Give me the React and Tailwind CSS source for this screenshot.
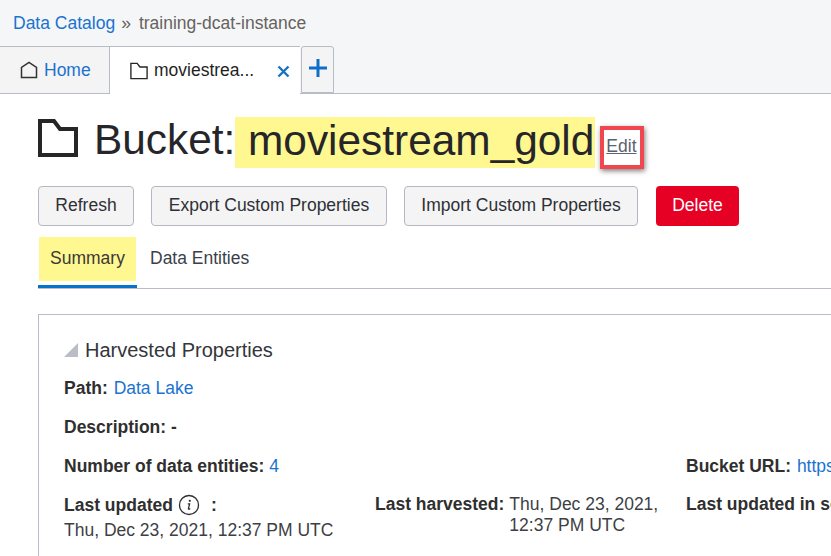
const FolderIcon = ({ size, sw, className }) => (
  <svg width={size} height={size} viewBox="0 0 40 40" fill="none" className={className}>
    <path d="M2 3H16L22 11H38V37H2Z" stroke="#262626" strokeWidth={sw} strokeLinejoin="miter" />
  </svg>
);

const Label = ({ children }) => <span className="font-bold text-[#2f2f2f]">{children}</span>;
const A = ({ children }) => <span className="text-[#1a73d0]">{children}</span>;
const Btn = ({ children, className }) => (
  <div className={`h-10 pb-[1px] flex items-center justify-center rounded-[4px] border border-[#b4b8c2] bg-[#f4f4f5] text-[#2f3035] ${className}`}>{children}</div>
);

export default function App() {
  return (
    <div className="w-[831px] h-[556px] overflow-hidden bg-white text-[17.5px] text-[#2f2f2f] font-['Liberation_Sans',Arial,sans-serif]">
      <div className="h-[46px] bg-[#f5f6f8] flex items-center pl-[13px]">
        <span className="text-[#1a73d0]">Data Catalog</span>
        <span className="text-[#66625e] ml-[6px]">»</span>
        <span className="text-[#66625e] ml-[8px] text-[17.5px]">training-dcat-instance</span>
      </div>

      <div className="h-[48px] bg-[#f5f6f8] flex border-b border-[#b8bcc6]">
        <div className="w-[110px] h-[47px] bg-[#f4f4f5] border-t border-r border-[#b8bcc6] flex items-center pl-[20px] gap-[6px]">
          <svg width="18" height="18" viewBox="0 0 18 18" fill="none">
            <path d="M1.5 16.5V6.5L9 1.5L16.5 6.5V16.5Z" stroke="#333" strokeWidth="1.5" />
          </svg>
          <A>Home</A>
        </div>
        <div className="w-[190px] h-[48px] bg-white border-t border-[#b8bcc6] flex items-center pl-[20px] relative z-10">
          <FolderIcon size={18} sw={3} />
          <span className="ml-[6px] text-[#1f1f1f]">moviestrea...</span>
          <svg width="13" height="13" viewBox="0 0 13 13" className="ml-[23px] mt-[2px]">
            <path d="M1.5 1.5L11.5 11.5M11.5 1.5L1.5 11.5" stroke="#1a73c0" strokeWidth="2.4" />
          </svg>
        </div>
        <div className="ml-[1px] w-[33px] h-[47px] bg-[#f4f4f5] border border-[#b8bcc6] rounded-t-[3px] flex items-center justify-center pb-[3px]">
          <svg width="18" height="18" viewBox="0 0 18 18">
            <path d="M9 0V18M0 9H18" stroke="#0f6fc6" strokeWidth="3" />
          </svg>
        </div>
      </div>

      <div className="pl-[38px]">
        <div className="h-[92px] flex items-start relative">
          <FolderIcon size={40} sw={4} className="mt-[24px]" />
          <span className="text-[42.4px] leading-[48px] mt-[22px] ml-[16px] w-[141px] whitespace-nowrap text-[#26262a]">Bucket:</span>
          <span className="text-[42.4px] leading-[47px] h-[51px] mt-[23px] pl-[13px] pr-[1px] bg-[#fff78f] text-[#26262a]">moviestream_gold</span>
          <span className="mt-[39px] ml-[11px] underline text-[#5a626c]">Edit</span>
          <div className="absolute left-[562px] top-[32px] w-[44px] h-[43px] border-[4px] border-[#f04650] shadow-[1px_2px_5px_rgba(0,0,0,0.5)]" />
        </div>

        <div className="flex items-start">
          <Btn className="w-[96px]">Refresh</Btn>
          <Btn className="w-[236px] ml-[17px]">Export Custom Properties</Btn>
          <Btn className="w-[234px] ml-[17px]">Import Custom Properties</Btn>
          <div className="w-[83px] h-10 pb-[1px] ml-[18px] rounded-[4px] bg-[#e60023] text-white flex items-center justify-center">Delete</div>
        </div>

        <div className="mt-[11px] h-[52px] flex items-start border-b border-[#b8bcc6]">
          <div className="w-[99px] h-[51px] border-b-[3px] border-[#0572ce] ">
            <div className="ml-[1px] w-[97px] h-[44px] pb-[1px] bg-[#fff78f] flex items-center justify-center text-[#3a3a3a]">Summary</div>
          </div>
          <div className="ml-[13px] h-[42px] flex items-center text-[#3a3f4a]">Data Entities</div>
        </div>

        <div className="mt-[25px] h-[260px] w-[900px] border border-[#b8bcc6] pl-[25px] pt-[24px]">
          <div className="flex items-center h-[22px]">
            <svg width="14" height="14" viewBox="0 0 14 14"><path d="M14 0V14H0Z" fill="#b8bdc6" /></svg>
            <span className="ml-[7px] text-[20px] text-[#33363b]">Harvested Properties</span>
          </div>
          <div className="mt-[17px] leading-[20px]"><Label>Path:</Label> <span className="ml-[1px]"><A>Data Lake</A></span></div>
          <div className="mt-[19px] leading-[20px]"><Label>Description:</Label> <span className="font-bold">-</span></div>
          <div className="mt-[19px] leading-[20px] flex">
            <div className="w-[622px] shrink-0"><Label>Number of data entities:</Label> <A>4</A></div>
            <div className="whitespace-nowrap"><Label>Bucket URL:</Label> <span className="ml-[1px]"><A>https://objectstorage</A></span></div>
          </div>
          <div className="mt-[18px] leading-[20px] flex items-start">
            <div className="w-[311px] shrink-0">
              <div className="flex items-center">
                <Label>Last updated</Label>
                <svg width="22" height="22" viewBox="0 0 22 22" className="ml-[5px]">
                  <circle cx="11" cy="11" r="9.5" fill="none" stroke="#2f2f2f" strokeWidth="1.3" />
                  <circle cx="11.8" cy="6.8" r="1.1" fill="#2f2f2f" />
                  <path d="M9.8 9.8H11.6L10.4 14.6C10.3 15.4 11 15.4 12.2 14.4" fill="none" stroke="#2f2f2f" strokeWidth="1.3" />
                </svg>
                <span className="font-bold ml-[11px]">:</span>
              </div>
              <div className="mt-[4px] text-[#3d3f45] whitespace-nowrap">Thu, Dec 23, 2021, 12:37 PM UTC</div>
            </div>
            <div className="w-[311px] shrink-0 flex">
              <Label>Last harvested:</Label>
              <span className="ml-[5px] w-[170px] leading-[21px] text-[#3d3f45]">Thu, Dec 23, 2021, 12:37 PM UTC</span>
            </div>
            <div className="whitespace-nowrap"><Label>Last updated in source:</Label></div>
          </div>
        </div>
      </div>
    </div>
  );
}
